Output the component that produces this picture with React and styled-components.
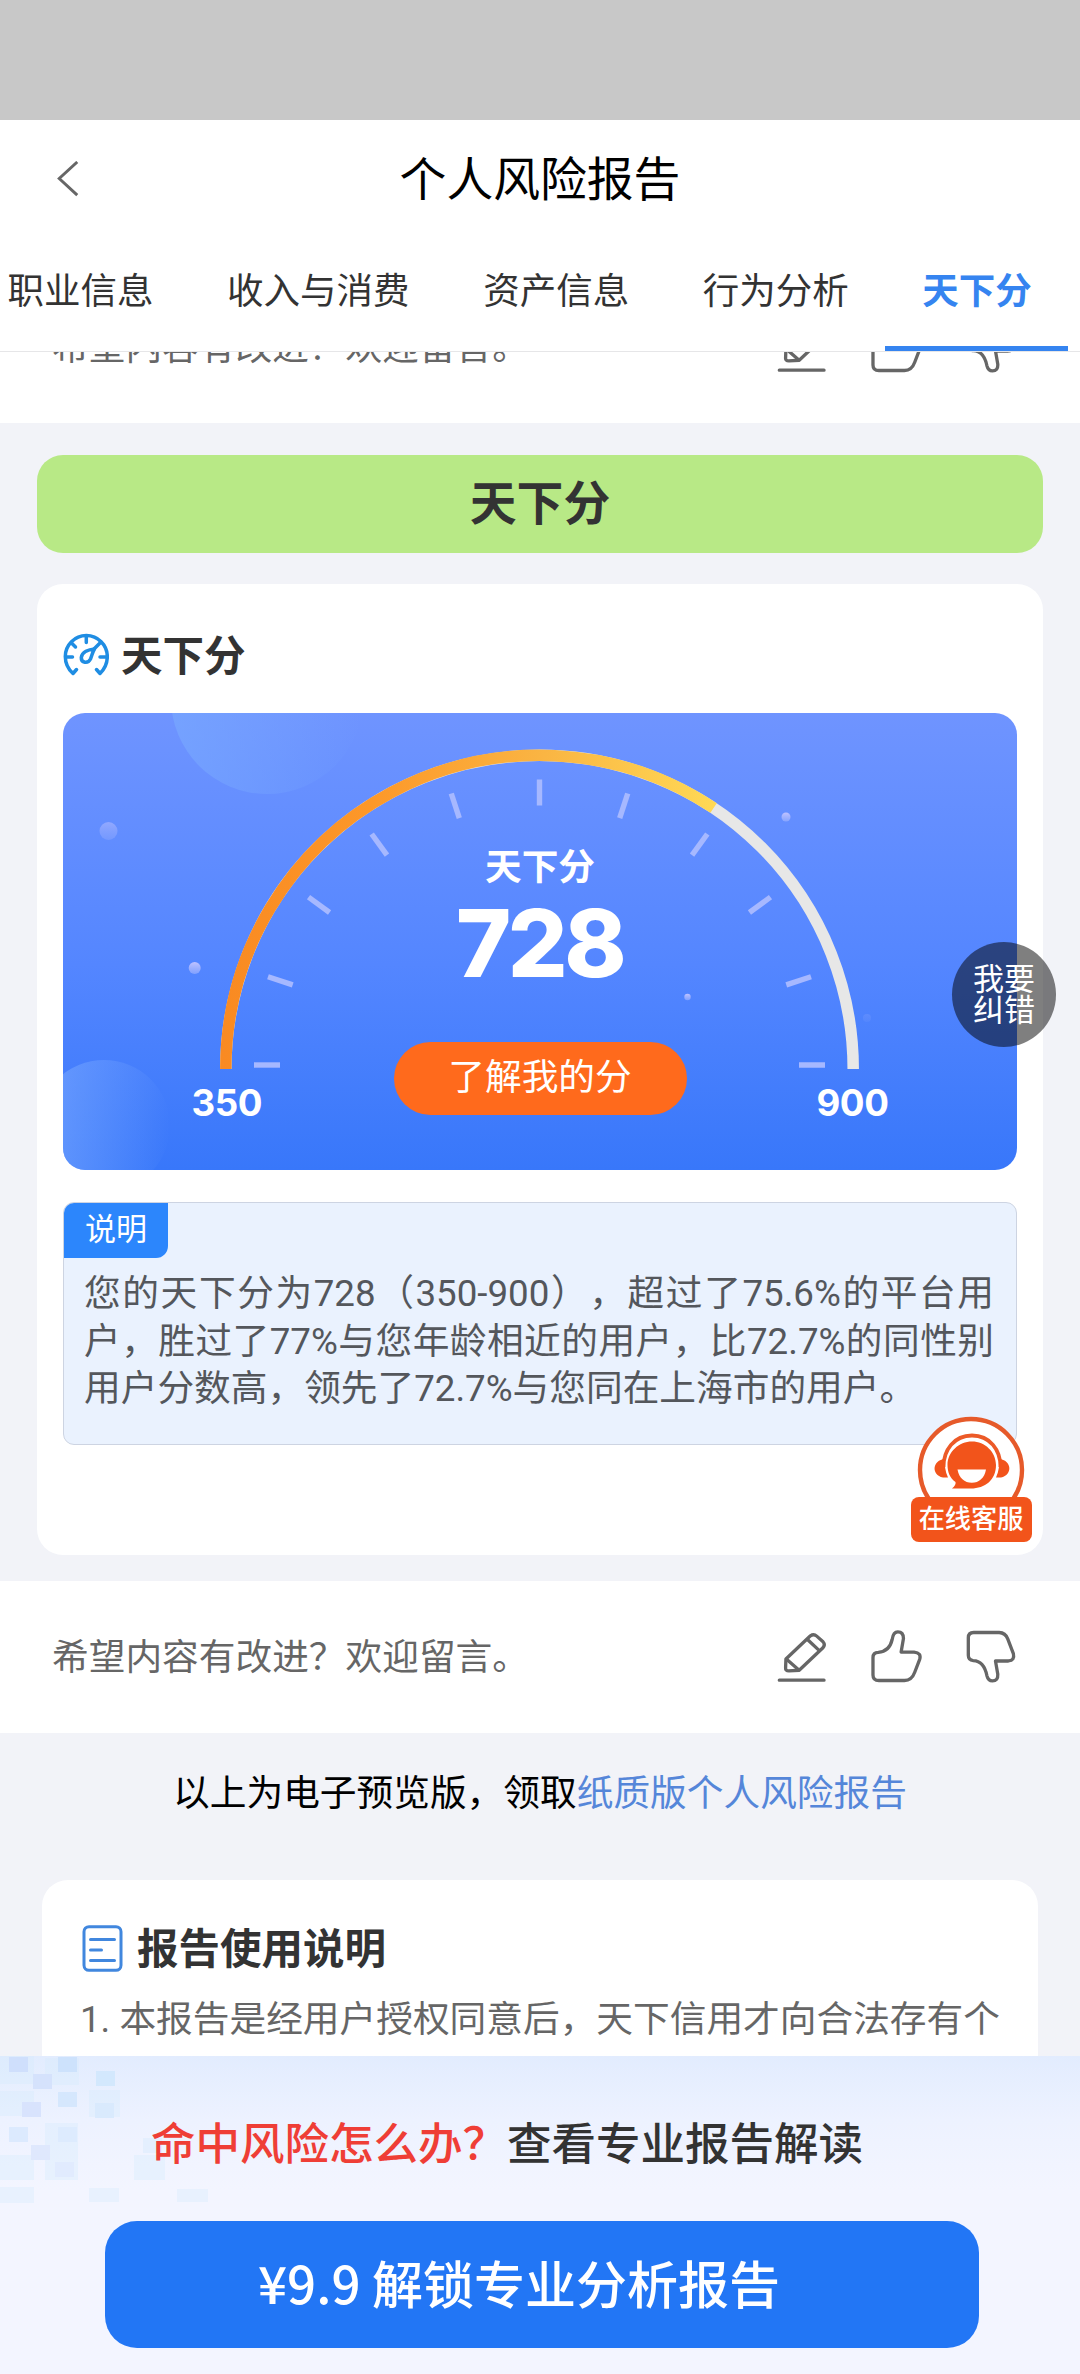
import React from 'react';
import styled, { createGlobalStyle } from 'styled-components';

const GlobalStyle = createGlobalStyle`
  * {
    box-sizing: border-box;
  }

  body {
    margin: 0;
    font-family: Roboto, 'Noto Sans CJK SC', sans-serif;
    font-size: 36.7px;
    color: #333;
  }
`;

const Page = styled.div`
  position: relative;
  display: flex;
  flex-direction: column;
  width: 1080px;
  height: 2374px;
  overflow: hidden;
  background-color: #f2f3f8;
`;

const StatusBar = styled.div`
  height: 120px;
  background-color: #c8c8c8;
`;

const Header = styled.header`
  display: grid;
  grid-template-columns: 1fr auto 1fr;
  align-items: center;
  height: 117px;
  padding: 0 57px;
  background-color: #fff;
`;

const Title = styled.h1`
  margin: 0;
  padding-top: 3px;
  font-size: 46.8px;
  font-weight: 400;
  line-height: 60px;
  color: #000;
`;

const Tabs = styled.nav`
  display: flex;
  justify-content: flex-end;
  height: 115px;
  padding-right: 12px;
  background-color: #fff;
  border-bottom: 1px solid #e6e6e8;
`;

const Tab = styled.a`
  flex-shrink: 0;
  padding: 25px 36.2px 0 37.4px;
  font-size: 36.5px;
  line-height: 60px;
  white-space: nowrap;
  color: ${({ $active }) => ($active ? '#3584f0' : '#333')};
  font-weight: ${({ $active }) => ($active ? 700 : 400)};
  border-bottom: 5px solid ${({ $active }) => ($active ? '#3584f0' : 'transparent')};
`;

const Content = styled.main`
  flex: 1;
  min-height: 0;
  overflow: hidden;
`;

const FeedbackRow = styled.div`
  display: flex;
  align-items: center;
  justify-content: space-between;
  height: 152px;
  margin-top: ${({ $scrolled }) => ($scrolled ? '-81px' : '26px')};
  padding: 0 62px 0 52px;
  background-color: #fff;
  color: #666;
`;

const FeedbackText = styled.span`
  line-height: 56px;
  padding-top: 2px;
`;

const FeedbackIcons = styled.div`
  display: flex;
  gap: 42px;

  svg {
    display: block;
    fill: none;
    stroke: #666;
    stroke-width: 10;
    stroke-linecap: round;
    stroke-linejoin: round;
  }
`;

const SectionTitle = styled.h2`
  margin: 32px 37px 31px;
  height: 98px;
  border-radius: 26px;
  background-color: #b8e986;
  text-align: center;
  font-size: 46.8px;
  line-height: 99px;
`;

const Card = styled.section`
  height: 971px;
  margin: 0 37px;
  padding: 41px 26px 0;
  border-radius: 26px;
  background-color: #fff;
`;

const CardHeading = styled.h3`
  display: flex;
  align-items: center;
  gap: ${({ $gap }) => $gap || 12}px;
  height: 60px;
  margin: 0;
  font-size: 41.5px;
  line-height: 60px;
`;

const HeadingText = styled.span`
  padding-top: 3px;
`;

const ScorePanel = styled.div`
  position: relative;
  display: flex;
  flex-direction: column;
  align-items: center;
  height: 457px;
  margin-top: 28px;
  border-radius: 22px;
  overflow: hidden;
  background: linear-gradient(#6f94ff, #5486ff 55%, #3877fa);
  color: #fff;
`;

const Dial = styled.svg`
  position: absolute;
  inset: 0;
`;

const ScoreName = styled.div`
  position: relative;
  margin-top: 129px;
  font-weight: 700;
  line-height: 52px;
`;

const ScoreValue = styled.div`
  position: relative;
  font-family: Inter, sans-serif;
  font-size: 94px;
  font-weight: 800;
  line-height: 98px;
  letter-spacing: -3.5px;
  padding-right: 1px;
`;

const ScoreButton = styled.button`
  position: relative;
  width: 293px;
  height: 73px;
  margin-top: 50px;
  padding: 0 0 2px;
  border: none;
  border-radius: 37px;
  background-color: #ff6a1c;
  color: #fff;
  font: inherit;
  line-height: 71px;
`;

const Range = styled.div`
  position: relative;
  display: flex;
  justify-content: space-between;
  width: 697px;
  margin-top: -34px;
  font-family: Inter, sans-serif;
  font-size: 36.7px;
  font-weight: 700;
  line-height: 44px;
  letter-spacing: -0.4px;
`;

const Note = styled.div`
  height: 243px;
  margin-top: 32px;
  border: 1px solid #cdd4e2;
  border-radius: 11px;
  overflow: hidden;
  background-color: #eaf2fe;
`;

const NoteTag = styled.div`
  width: 104px;
  height: 55px;
  border-radius: 0 0 12px 0;
  background-color: #2c86fc;
  color: #fff;
  text-align: center;
  font-size: 31px;
  line-height: 53px;
`;

const NoteLine = styled.div`
  margin: 0 22px 0 20px;
  height: 47.7px;
  line-height: 47.7px;
  color: #54575c;
  white-space: nowrap;
  text-spacing-trim: space-all;
  text-align-last: ${({ $last }) => ($last ? 'left' : 'justify')};

  ${NoteTag} + & {
    margin-top: 12px;
  }
`;

const PaperLine = styled.p`
  margin: 0;
  height: 147px;
  padding-top: 35px;
  text-align: center;
  line-height: 52px;
  color: #000;
`;

const PaperLink = styled.a`
  color: #5586d9;
`;

const UsageCard = styled.section`
  height: 400px;
  margin: 0 42px;
  padding: 38px;
  border-radius: 26px;
  background-color: #fff;
`;

const UsageText = styled.div`
  margin-top: 14px;
  line-height: 55px;
  white-space: nowrap;
  color: #666;
`;

const Footer = styled.footer`
  position: relative;
  height: 318px;
  background: linear-gradient(#e2ecfe, #edf2ff 20%, #f3f5ff 42%, #f3f5ff);
`;

const Mosaic = styled.svg`
  position: absolute;
  left: 0;
  top: 0;
`;

const FooterText = styled.div`
  position: relative;
  padding: 55px 0 0 151px;
  font-family: 'Noto Sans CJK SC', sans-serif;
  font-size: 44.5px;
  font-weight: 500;
  line-height: 60px;
`;

const Danger = styled.span`
  color: #ef3e36;
`;

const UnlockButton = styled.button`
  position: relative;
  display: block;
  width: 874px;
  height: 127px;
  margin: 50px 0 0 105px;
  padding: 0 46px 6px 0;
  border: none;
  border-radius: 32px;
  background-color: #2276f5;
  color: #fff;
  font-family: 'Noto Sans CJK SC', sans-serif;
  font-size: 51px;
  font-weight: 500;
`;

const CorrectButton = styled.button`
  position: absolute;
  left: 952px;
  top: 942px;
  width: 104px;
  height: 105px;
  padding: 0;
  border: none;
  border-radius: 50%;
  background-color: rgba(0, 0, 0, 0.5);
  color: #fff;
  font-family: inherit;
  font-size: 31px;
  line-height: 31px;
`;

const ServiceButton = styled.div`
  position: absolute;
  left: 910px;
  top: 1415px;
  display: flex;
  flex-direction: column;
  align-items: center;
  width: 122px;
`;

const ServiceLabel = styled.div`
  width: 121px;
  height: 45px;
  border-radius: 8px;
  background-color: #f2541b;
  color: #fff;
  text-align: center;
  font-family: 'Noto Sans CJK SC', sans-serif;
  font-size: 26.2px;
  font-weight: 500;
  line-height: 41px;
`;

const BackIcon = () => (
  <svg width="22" height="36" viewBox="0 0 22 37" fill="none" stroke="#666" strokeWidth="3">
    <path d="M20.5 1 L2 18 L20.5 35" />
  </svg>
);

const EditIcon = () => (
  <svg width="53" height="60" viewBox="105 110 160 180">
    <path d="M138 206 L212 136 Q222 129 231 137 L250 154 Q258 163 249 173 L178 240 L147 242 Q136 242 137 232 Z" />
    <path d="M203 147 L238 180 M140 207 L177 239 M118 270 H253" />
  </svg>
);

const LikeIcon = () => (
  <svg width="53" height="60" viewBox="390 110 160 180">
    <path d="M399 202 Q399 186 415 186 C440 184 452 170 457 147 C459 132 464 124 474 124 C486 124 491 132 491 144 L484 185 H523 Q546 187 540 207 L525 246 Q516 271 494 271 H417 Q399 271 399 254 Z" />
  </svg>
);

const DislikeIcon = () => (
  <svg width="53" height="60" viewBox="675 110 160 180">
    <path d="M685 142 Q685 126 701 126 H778 Q797 127 804 145 L821 190 Q826 210 806 212 H767 L774 252 Q775 272 758 272 Q745 272 741 256 C736 231 725 212 700 211 Q685 210 685 195 Z" />
  </svg>
);

const GaugeIcon = () => (
  <svg width="46" height="44" viewBox="-0.5 0 46 44" fill="none" stroke="#1f8de3" strokeWidth="3.5" strokeLinecap="round" strokeLinejoin="round">
    <path d="M13 36.5 L9.5 40.5 C4.5 36 1.8 30 1.8 23.5 A21 21 0 0 1 43.8 23.5 C43.8 30 41 36 36.5 40.5 L33 36.5" />
    <path d="M22.8 3 V9.5 M2.5 24 H9 M36.5 24 H43 M8 10 L12 14 M37 9.5 L30.5 16" />
    <path d="M31 16 C25 16.5 18.5 19 17.8 24.5 C17.5 30 24.5 31 27 26 C28.5 22.5 29 19 31 16 Z" />
  </svg>
);

const DocumentIcon = () => (
  <svg width="43" height="47" viewBox="0 0 43 47" fill="none" stroke="#4187de" strokeWidth="3" strokeLinecap="round">
    <rect x="4" y="1.7" width="37" height="43.6" rx="5" />
    <path d="M10.500 14.500 H34.500 M10.500 25 H21.500 M10.500 35.500 H34.500" />
  </svg>
);

const ServiceIcon = () => (
  <svg width="122" height="82" viewBox="0 0 122 82">
    <circle cx="61" cy="55" r="51" fill="#fff" stroke="#e65a2a" strokeWidth="4.4" />
    <path d="M33.5 52 C33.5 35 44 20.5 62 20.5 C80 20.5 90.5 35 90.5 52" fill="none" stroke="#ec5a28" strokeWidth="3.8" />
    <path d="M35 44 C22 45 21 60 33 62.5 L38 62.5 C35 56 34.5 50 35 44 Z" fill="#f2541b" />
    <path d="M89 44 C102 45 103 60 91 62.5 L86 62.5 C89 56 89.5 50 89 44 Z" fill="#f2541b" />
    <path d="M62 26.5 C75 26.5 86 37 86 50 C86 65 75 73.5 61 73.5 H42 C45 71 46 69 45.5 67 C40 63 37.5 57 37.5 50 C37.5 37 49 26.5 62 26.5 Z" fill="#f2541b" />
    <path d="M47.5 54.5 H76 C74.5 63 69 67.8 61.8 67.8 C54.5 67.8 49 63 47.5 54.5 Z" fill="#fff" />
  </svg>
);

const point = (cx, cy, r, deg) => {
  const rad = (deg * Math.PI) / 180;
  return [cx - r * Math.cos(rad), cy - r * Math.sin(rad)];
};

const ScoreDial = ({ score, min, max }) => {
  const angle = ((score - min) / (max - min)) * 180;
  const [x, y] = point(476.5, 356, 313.7, angle);
  const ticks = Array.from({ length: 11 }, (_, i) => i * 18);

  return (
    <Dial width="954" height="457" viewBox="0 0 954 457" fill="none">
      <defs>
        <linearGradient id="progress" gradientUnits="userSpaceOnUse" x1="160" y1="0" x2="655" y2="0">
          <stop offset="0" stopColor="#f98a22" />
          <stop offset="0.3" stopColor="#fd9829" />
          <stop offset="0.65" stopColor="#fab543" />
          <stop offset="1" stopColor="#ffd955" />
        </linearGradient>
        <linearGradient id="bubble">
          <stop offset="0" stopColor="#78a8ff" stopOpacity="0.7" />
          <stop offset="1" stopColor="#78a8ff" stopOpacity="0" />
        </linearGradient>
        <linearGradient id="dot" x2="0" y2="1">
          <stop offset="0" stopColor="#c0c2ff" />
          <stop offset="1" stopColor="#a0b4ff" stopOpacity="0.6" />
        </linearGradient>
      </defs>
      <circle cx="204" cy="-15" r="96" fill="url(#bubble)" />
      <circle cx="41" cy="413" r="66" fill="url(#bubble)" />
      <circle cx="45.5" cy="118" r="9" fill="url(#dot)" opacity="0.5" />
      <circle cx="131.7" cy="255" r="6" fill="url(#dot)" />
      <circle cx="723" cy="104" r="4.5" fill="url(#dot)" />
      <circle cx="624.5" cy="284" r="3.2" fill="url(#dot)" />
      <circle cx="804" cy="305" r="4" fill="url(#dot)" opacity="0.15" />
      <path d="M162.8 356 A313.7 313.7 0 0 1 790.2 356" stroke="#e7e7e7" strokeWidth="11.5" />
      <path d={`M162.8 356 A313.7 313.7 0 0 1 ${x} ${y}`} stroke="url(#progress)" strokeWidth="11.5" />
      {ticks.map((deg) => {
        const [x1, y1] = point(476.5, 352, 259.5, deg);
        const [x2, y2] = point(476.5, 352, 285.5, deg);
        return <line key={deg} x1={x1} y1={y1} x2={x2} y2={y2} stroke="#a6b8ff" strokeWidth="5.4" />;
      })}
    </Dial>
  );
};

const blocks = [
  [0, 0, 34, 28], [0, 35, 34, 25], [0, 99, 34, 25], [45, 2, 34, 27], [45, 67, 33, 57],
  [0, 131, 34, 16], [89, 132, 30, 14], [177, 133, 31, 13], [134, 99, 31, 25], [89, 34, 31, 27],
];

const chips = [
  [9, 1, '#cfdffc'], [58, 1, '#cde2fc'], [33, 18, '#d5e2fc'], [96, 15, '#d3e8fd'], [58, 36, '#d5e7fd'],
  [22, 46, '#d8e3fd'], [95, 47, '#d9eafd'], [9, 71, '#dceafe'], [58, 71, '#ddebfe'], [31, 89, '#dfe8fd'],
  [55, 106, '#e1ebfe'], [143, 82, '#e4effe'],
];

const Feedback = ({ scrolled }) => (
  <FeedbackRow $scrolled={scrolled}>
    <FeedbackText>希望内容有改进？欢迎留言。</FeedbackText>
    <FeedbackIcons>
      <EditIcon />
      <LikeIcon />
      <DislikeIcon />
    </FeedbackIcons>
  </FeedbackRow>
);

const tabs = ['职业信息', '收入与消费', '资产信息', '行为分析', '天下分'];

const App = () => {
  return (
    <>
      <GlobalStyle />
      <Page>
        <StatusBar />
        <Header>
          <BackIcon />
          <Title>个人风险报告</Title>
        </Header>
        <Tabs>
          {tabs.map((tab) => (
            <Tab key={tab} $active={tab === '天下分'}>{tab}</Tab>
          ))}
        </Tabs>

        <Content>
          <Feedback scrolled />
          <SectionTitle>天下分</SectionTitle>
          <Card>
            <CardHeading>
              <GaugeIcon />
              <HeadingText>天下分</HeadingText>
            </CardHeading>
            <ScorePanel>
              <ScoreDial score={728} min={350} max={900} />
              <ScoreName>天下分</ScoreName>
              <ScoreValue>728</ScoreValue>
              <ScoreButton>了解我的分</ScoreButton>
              <Range>
                <span>350</span>
                <span>900</span>
              </Range>
            </ScorePanel>
            <Note>
              <NoteTag>说明</NoteTag>
              <NoteLine>您的天下分为728（350-900），超过了75.6%的平台用</NoteLine>
              <NoteLine>户，胜过了77%与您年龄相近的用户，比72.7%的同性别</NoteLine>
              <NoteLine $last>用户分数高，领先了72.7%与您同在上海市的用户。</NoteLine>
            </Note>
          </Card>
          <Feedback />
          <PaperLine>
            以上为电子预览版，领取<PaperLink>纸质版个人风险报告</PaperLink>
          </PaperLine>
          <UsageCard>
            <CardHeading $gap={14}>
              <DocumentIcon />
              <HeadingText>报告使用说明</HeadingText>
            </CardHeading>
            <UsageText>1. 本报告是经用户授权同意后，天下信用才向合法存有个</UsageText>
          </UsageCard>
        </Content>

        <Footer>
          <Mosaic width="320" height="150">
            {blocks.map(([x, y, w, h]) => (
              <rect key={`${x}-${y}`} x={x} y={y} width={w} height={h} fill="#d3eafd" opacity="0.35" />
            ))}
            {chips.map(([x, y, fill]) => (
              <rect key={`${x}-${y}`} x={x} y={y} width="19" height="15" fill={fill} />
            ))}
          </Mosaic>
          <FooterText>
            <Danger>命中风险怎么办？</Danger>查看专业报告解读
          </FooterText>
          <UnlockButton>¥9.9 解锁专业分析报告</UnlockButton>
        </Footer>

        <CorrectButton>
          我要
          <br />
          纠错
        </CorrectButton>
        <ServiceButton>
          <ServiceIcon />
          <ServiceLabel>在线客服</ServiceLabel>
        </ServiceButton>
      </Page>
    </>
  );
};

export default App;
